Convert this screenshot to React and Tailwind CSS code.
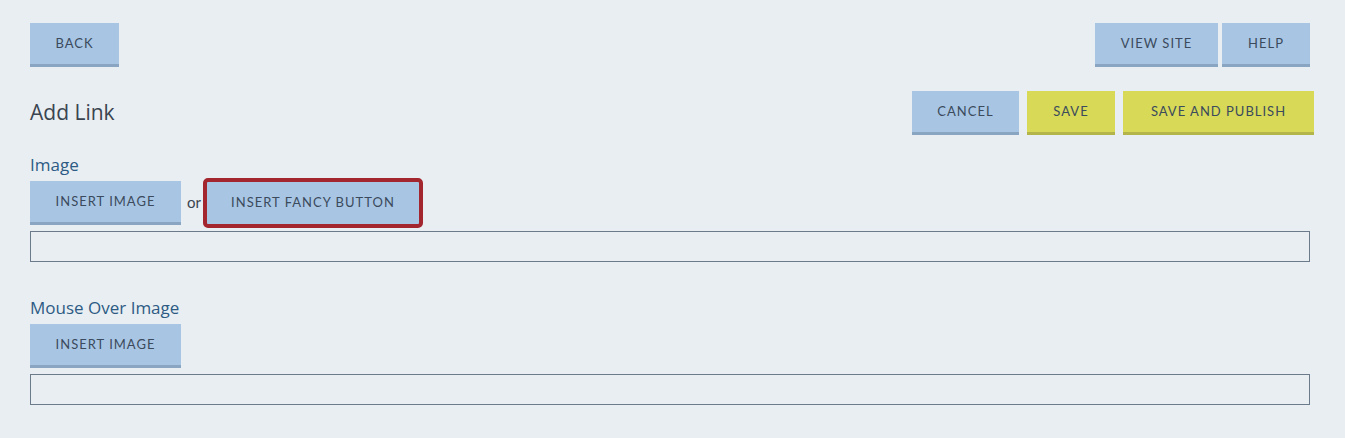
import React from "react";

const font = { fontFamily: "Lato, 'Noto Sans', sans-serif" };

function Btn({ children, yellow, className = "" }) {
  return (
    <button
      type="button"
      className={`h-[44px] px-[25px] text-[13px] uppercase tracking-[1px] text-[#3b4a5c] border-b-[3px] ${
        yellow ? "bg-[#d7d957] border-[#b3b54a]" : "bg-[#a8c6e4] border-[#8aa5c2]"
      } ${className}`}
    >
      {children}
    </button>
  );
}

function Label({ children, className = "" }) {
  return (
    <div
      className={`text-[17px] leading-[20px] text-[#2d5b84] font-['Open_Sans',sans-serif] ${className}`}
    >
      {children}
    </div>
  );
}

export default function App() {
  return (
    <div className="min-h-[438px] bg-[#e9eef2] px-[30px] pt-[23px]" style={font}>
      <div className="flex items-start justify-between pr-[5px]">
        <Btn className="w-[89px]">Back</Btn>
        <div className="flex gap-[4px]">
          <Btn className="w-[123px]">View Site</Btn>
          <Btn className="w-[88px]">Help</Btn>
        </div>
      </div>

      <div className="mt-[24px] flex h-[44px] items-center justify-between pr-[1px]">
        <h1 className="text-[21px] text-[#3a4450] font-['Open_Sans',sans-serif]">Add Link</h1>
        <div className="flex gap-[8px]">
          <Btn className="w-[107px]">Cancel</Btn>
          <Btn yellow className="w-[88px]">Save</Btn>
          <Btn yellow className="w-[191px]">Save and Publish</Btn>
        </div>
      </div>

      <div className="pr-[5px]">
        <Label className="mt-[20px]">Image</Label>
        <div className="mt-[3px] flex items-start">
          <Btn className="mt-[3px] w-[151px]">Insert Image</Btn>
          <span className="ml-[6px] mr-[2px] mt-[13px] text-[15px] text-[#3a4450]">or</span>
          <div className="rounded-[5px] border-[4px] border-[#a3262f] bg-[#a8c6e4]">
            <button
              type="button"
              className="block h-[42px] w-[212px] text-[13px] uppercase tracking-[1px] text-[#3b4a5c]"
            >
              Insert Fancy Button
            </button>
          </div>
        </div>
        <input className="mt-[3px] block h-[31px] w-full border border-[#6c7b8b] bg-[#e9eef2]" />

        <Label className="mt-[36px]">Mouse Over Image</Label>
        <Btn className="mt-[6px] block w-[151px]">Insert Image</Btn>
        <input className="mt-[6px] block h-[31px] w-full border border-[#6c7b8b] bg-[#e9eef2]" />
      </div>
    </div>
  );
}
